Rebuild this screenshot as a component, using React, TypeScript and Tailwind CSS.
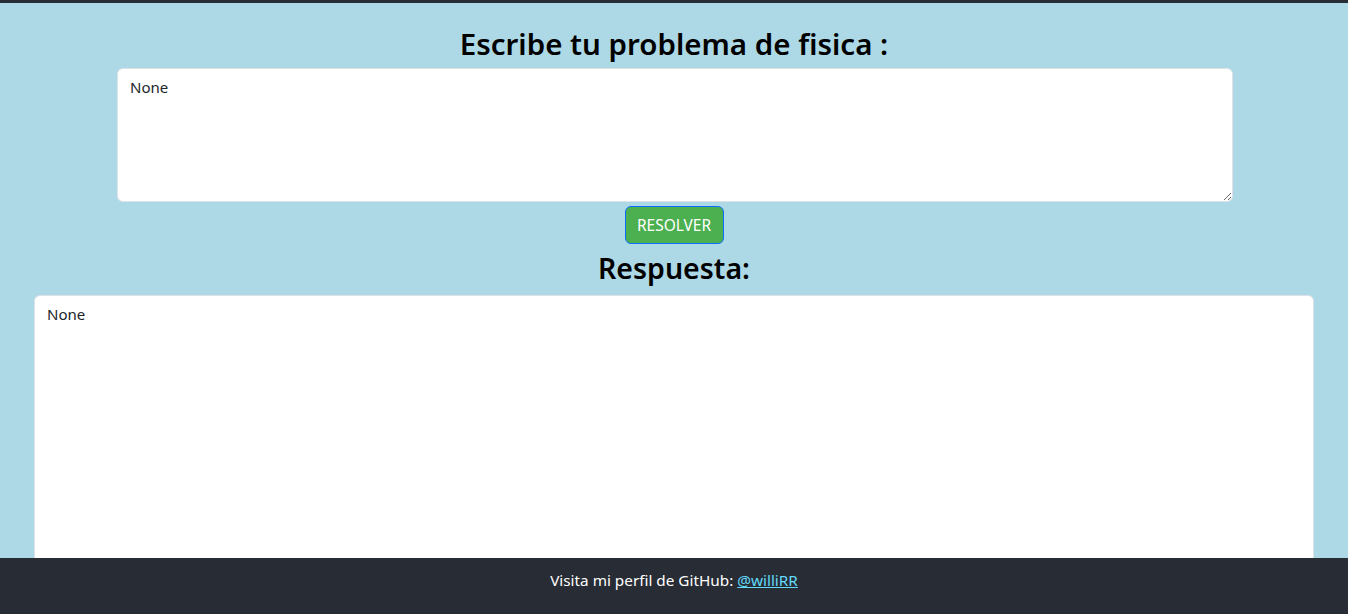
import { useState } from 'react';

export default function App() {
  const [problem, setProblem] = useState('None');
  const [answer, setAnswer] = useState('None');

  return (
    <div className="min-h-screen bg-[#add8e6] font-['Noto_Sans','Open_Sans',sans-serif] text-[#212529]">
      <div className="h-[3px] bg-[#282c34]" />
      <main className="flex flex-col items-center pb-20">
        <h2 className="mt-[22px] mb-[5px] text-[29.5px] leading-[38px] font-semibold text-black">
          Escribe tu problema de fisica :
        </h2>
        <textarea
          value={problem}
          onChange={(e) => setProblem(e.target.value)}
          className="ml-[2px] h-[134px] w-[1116px] resize-y rounded-[6px] border border-[#dee2e6] bg-white px-[12px] py-[6px] text-[15px] leading-6 outline-none"
        />
        <button
          onClick={() => setAnswer(problem)}
          className="mt-[4px] h-[38px] w-[99px] rounded-[6px] border border-[#0d6efd] bg-[#4caf50] pt-[1px] text-[15.5px] text-white"
        >
          RESOLVER
        </button>
        <h2 className="mt-[5px] mb-[8px] text-[28.5px] leading-[38px] font-semibold text-black">Respuesta:</h2>
        <textarea
          value={answer}
          onChange={(e) => setAnswer(e.target.value)}
          className="h-[320px] w-[1280px] resize-y rounded-[6px] border border-[#dee2e6] bg-white px-[12px] py-[6px] text-[15px] leading-6 outline-none"
        />
      </main>
      <footer className="fixed inset-x-0 bottom-0 flex h-[56px] justify-center bg-[#282c34] pt-[10px] text-[15.3px] leading-6 text-white">
        <p>
          Visita mi perfil de GitHub:{' '}
          <a href="#" className="text-[#61dafb] underline">
            @williRR
          </a>
        </p>
      </footer>
    </div>
  );
}
